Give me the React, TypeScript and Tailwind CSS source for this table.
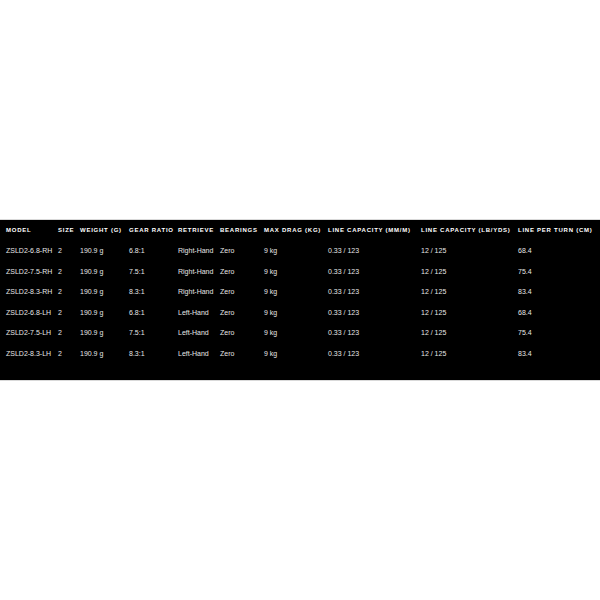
const headers = [
  "MODEL",
  "SIZE",
  "WEIGHT (G)",
  "GEAR RATIO",
  "RETRIEVE",
  "BEARINGS",
  "MAX DRAG (KG)",
  "LINE CAPACITY (MM/M)",
  "LINE CAPACITY (LB/YDS)",
  "LINE PER TURN (CM)",
];

const rows = [
  ["ZSLD2-6.8-RH", "2", "190.9 g", "6.8:1", "Right-Hand", "Zero", "9 kg", "0.33 / 123", "12 / 125", "68.4"],
  ["ZSLD2-7.5-RH", "2", "190.9 g", "7.5:1", "Right-Hand", "Zero", "9 kg", "0.33 / 123", "12 / 125", "75.4"],
  ["ZSLD2-8.3-RH", "2", "190.9 g", "8.3:1", "Right-Hand", "Zero", "9 kg", "0.33 / 123", "12 / 125", "83.4"],
  ["ZSLD2-6.8-LH", "2", "190.9 g", "6.8:1", "Left-Hand", "Zero", "9 kg", "0.33 / 123", "12 / 125", "68.4"],
  ["ZSLD2-7.5-LH", "2", "190.9 g", "7.5:1", "Left-Hand", "Zero", "9 kg", "0.33 / 123", "12 / 125", "75.4"],
  ["ZSLD2-8.3-LH", "2", "190.9 g", "8.3:1", "Left-Hand", "Zero", "9 kg", "0.33 / 123", "12 / 125", "83.4"],
];

// column starts: 6, 58, 80, 129, 178, 220, 264, 328, 421, 518
const cols = "grid grid-cols-[52px_22px_49px_49px_42px_44px_64px_93px_97px_1fr] items-center h-[20.6px]";

export default function App() {
  return (
    <div className="h-[600px] w-[600px] bg-white flex items-center" style={{ fontFamily: '"Liberation Sans", Arial, sans-serif' }}>
      <div className="w-full h-[162px] bg-black border-y border-[#d9d9d9] pl-[6px] pt-[0.3px]">
        <div className={cols}>
          {headers.map((h) => (
            <div key={h} className="text-[6px] font-bold tracking-[0.75px] text-white whitespace-nowrap">
              {h}
            </div>
          ))}
        </div>
        {rows.map((r) => (
          <div key={r[0]} className={cols}>
            {r.map((c, i) => (
              <div key={i} className="text-[7px] text-[#e6e6e6] whitespace-nowrap">
                {c}
              </div>
            ))}
          </div>
        ))}
      </div>
    </div>
  );
}
